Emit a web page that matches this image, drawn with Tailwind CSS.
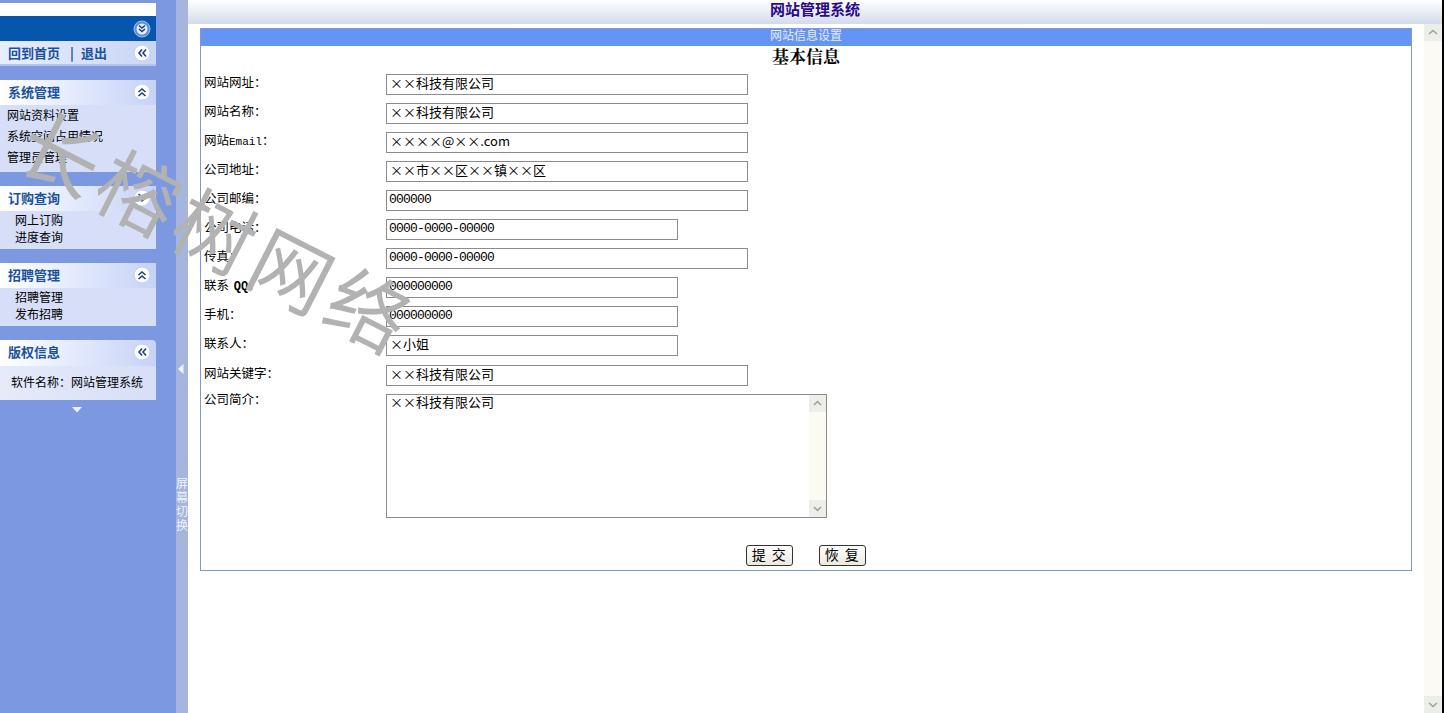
<!DOCTYPE html>
<html lang="zh-CN">

<head>
    <meta charset="UTF-8" />
    <title>网站管理系统</title>
    <script src="https://cdn.jsdelivr.net/npm/@tailwindcss/browser@4"></script>
</head>

<body class="h-[713px] w-[1444px] overflow-hidden bg-white font-['Noto_Sans_CJK_SC',sans-serif] text-[12px] leading-none text-black">
    <div class="relative flex h-[713px] border-r-2 border-black">

        <!-- Sidebar -->
        <aside class="flex w-[176px] shrink-0 flex-col bg-[#7b98e0] pt-[3px]">
            <div class="h-[13px] w-[156px] bg-white"></div>
            <div class="flex h-[25px] w-[156px] items-center justify-end bg-[#0656ad] pr-[5px]">
                <svg width="18" height="18" viewBox="0 0 18 18"><circle cx="9" cy="9" r="8" fill="#5f8fd8" stroke="#9dbdea"/><circle cx="9" cy="9" r="5.5" fill="#e6eefa"/><path d="M6 5.500 9 8l3-2.500M6 9l3 2.500L12 9" fill="none" stroke="#1f3f86" stroke-width="1.600"/></svg>
            </div>
            <div class="flex h-[25px] w-[156px] items-center justify-between border-b-2 border-[#b4c3ec] bg-gradient-to-r from-[#e8eefc] to-[#c9d5f6] pr-[5px] pl-[8px] font-bold text-[#1c5299]">
                <span class="flex text-[13px]"><span>回到首页</span><span class="ml-[10px]">|</span><span class="ml-[7px]">退出</span></span>
                <svg width="18" height="18" viewBox="0 0 18 18"><circle cx="9" cy="9" r="8" fill="#fff" stroke="#c4d0ee"/><path d="M9 5.500 6 9l3 3.500M13 5.500 10 9l3 3.500" fill="none" stroke="#1f3f86" stroke-width="1.600"/></svg>
            </div>

            <div class="mt-[14px] w-[156px]">
                <div class="flex h-[25px] items-center justify-between bg-gradient-to-r from-white to-[#c6d3f7] pr-[5px] pb-[2px] pl-[8px] text-[13px] font-bold text-[#1c5299]">
                    <span>系统管理</span>
                    <svg width="18" height="18" viewBox="0 0 18 18"><circle cx="9" cy="9" r="8" fill="#fff" stroke="#c4d0ee"/><path d="M5.500 9 9 6l3.500 3M5.500 13 9 10l3.500 3" fill="none" stroke="#1f3f86" stroke-width="1.600"/></svg>
                </div>
                <ul class="flex h-[67px] flex-col gap-[8px] bg-[#d6dff7] pt-[3px] pl-[7px] text-[12px] leading-[13px]">
                    <li>网站资料设置</li>
                    <li>系统空间占用情况</li>
                    <li>管理员管理</li>
                </ul>
            </div>

            <div class="mt-[14px] w-[156px]">
                <div class="flex h-[25px] items-center justify-between bg-gradient-to-r from-white to-[#c6d3f7] pr-[5px] pb-[2px] pl-[8px] text-[13px] font-bold text-[#1c5299]">
                    <span>订购查询</span>
                    <svg width="18" height="18" viewBox="0 0 18 18"><circle cx="9" cy="9" r="8" fill="#fff" stroke="#c4d0ee"/><path d="M5.500 5 9 8l3.500-3M5.500 9 9 12l3.500-3" fill="none" stroke="#1f3f86" stroke-width="1.600"/></svg>
                </div>
                <ul class="flex h-[38px] flex-col gap-[4px] bg-[#d6dff7] pt-[2px] pl-[15px] text-[12px] leading-[13px]">
                    <li>网上订购</li>
                    <li>进度查询</li>
                </ul>
            </div>

            <div class="mt-[14px] w-[156px]">
                <div class="flex h-[25px] items-center justify-between bg-gradient-to-r from-white to-[#c6d3f7] pr-[5px] pb-[2px] pl-[8px] text-[13px] font-bold text-[#1c5299]">
                    <span>招聘管理</span>
                    <svg width="18" height="18" viewBox="0 0 18 18"><circle cx="9" cy="9" r="8" fill="#fff" stroke="#c4d0ee"/><path d="M5.500 9 9 6l3.500 3M5.500 13 9 10l3.500 3" fill="none" stroke="#1f3f86" stroke-width="1.600"/></svg>
                </div>
                <ul class="flex h-[38px] flex-col gap-[4px] bg-[#d6dff7] pt-[2px] pl-[15px] text-[12px] leading-[13px]">
                    <li>招聘管理</li>
                    <li>发布招聘</li>
                </ul>
            </div>

            <div class="mt-[14px] w-[156px]">
                <div class="flex h-[26px] items-center justify-between rounded-tr-[4px] bg-gradient-to-r from-white to-[#c6d3f7] pr-[5px] pb-[3px] pl-[8px] text-[13px] font-bold text-[#1c5299]">
                    <span>版权信息</span>
                    <svg width="18" height="18" viewBox="0 0 18 18"><circle cx="9" cy="9" r="8" fill="#fff" stroke="#c4d0ee"/><path d="M9 5.500 6 9l3 3.500M13 5.500 10 9l3 3.500" fill="none" stroke="#1f3f86" stroke-width="1.600"/></svg>
                </div>
                <div class="flex h-[34px] items-center bg-gradient-to-r from-[#e6ebfa] to-[#d6dff7] pb-[3px] pl-[11px] text-[12px]">软件名称：网站管理系统</div>
            </div>

            <div class="mt-[7px] flex w-[156px] justify-center pr-[2px]">
                <svg width="10" height="6" viewBox="0 0 10 6"><path d="M0 0h10L5 5.500z" fill="#eef3fb"/></svg>
            </div>
        </aside>

        <!-- Splitter -->
        <div class="flex w-[12px] shrink-0 flex-col items-center bg-[#a5b5dd] text-white">
            <svg class="mt-[364px] mr-[2px]" width="6" height="10" viewBox="0 0 6 10"><path d="M5.500 0v10L0 5z" fill="#eef3fb"/></svg>
            <div class="mt-[102px] w-[12px] text-center text-[12px] leading-[14px] text-[#eef2fb]">屏幕切换</div>
        </div>

        <!-- Main -->
        <main class="flex min-w-0 flex-1 flex-col">
            <header class="h-[24px] bg-gradient-to-b from-white to-[#d3dbe9] pt-[1px] text-center text-[15px] leading-[16px] font-bold text-[#2a0a86]">网站管理系统</header>

            <div class="flex min-h-0 flex-1">
                <div class="min-w-0 flex-1 pt-[4px] pl-[12px]">
                    <section class="h-[543px] w-[1212px] border border-[#7f9ac4]">
                        <h2 class="h-[17px] bg-[#6495f5] text-center leading-[12px] font-normal text-[#e4ecff]">网站信息设置</h2>
                        <h3 class="h-[28px] pt-[3px] text-center font-['Liberation_Serif','Noto_Serif_CJK_SC','Noto_Sans_CJK_SC',serif] text-[17px] leading-[18px] font-bold">基本信息</h3>

                        <form class="flex flex-col gap-[8px] pl-[3px] text-[12.5px]">
                            <label class="flex h-[21px] items-start"><span class="w-[182px] pt-[2px]">网站网址：</span><input class="h-[21px] w-[362px] border border-[#8c8c8c] pb-[5px] pl-[3px] text-[13px]" value="××科技有限公司"></label>
                            <label class="flex h-[21px] items-start"><span class="w-[182px] pt-[2px]">网站名称：</span><input class="h-[21px] w-[362px] border border-[#8c8c8c] pb-[5px] pl-[3px] text-[13px]" value="××科技有限公司"></label>
                            <label class="flex h-[21px] items-start"><span class="w-[182px] pt-[2px]">网站<span class="font-['Liberation_Mono',monospace] text-[11px]">Email</span>：</span><input class="h-[21px] w-[362px] border border-[#8c8c8c] pb-[5px] pl-[3px] text-[13px]" value="××××@××.com"></label>
                            <label class="flex h-[21px] items-start"><span class="w-[182px] pt-[2px]">公司地址：</span><input class="h-[21px] w-[362px] border border-[#8c8c8c] pb-[5px] pl-[3px] text-[13px]" value="××市××区××镇××区"></label>
                            <label class="flex h-[21px] items-start"><span class="w-[182px] pt-[2px]">公司邮编：</span><input class="h-[21px] w-[362px] border border-[#8c8c8c] pb-[2px] pl-[2px] font-['Liberation_Mono',monospace] text-[13px] tracking-[-0.8px]" value="000000"></label>
                            <label class="flex h-[21px] items-start"><span class="w-[182px] pt-[2px]">公司电话：</span><input class="h-[21px] w-[292px] border border-[#8c8c8c] pb-[2px] pl-[2px] font-['Liberation_Mono',monospace] text-[13px] tracking-[-0.8px]" value="0000-0000-00000"></label>
                            <label class="flex h-[21px] items-start"><span class="w-[182px] pt-[2px]">传真：</span><input class="h-[21px] w-[362px] border border-[#8c8c8c] pb-[2px] pl-[2px] font-['Liberation_Mono',monospace] text-[13px] tracking-[-0.8px]" value="0000-0000-00000"></label>
                            <label class="flex h-[21px] items-start"><span class="w-[182px] pt-[2px]">联系 <b class="ml-[2px] font-['Liberation_Mono',monospace] text-[12px]">QQ</b>：</span><input class="h-[21px] w-[292px] border border-[#8c8c8c] pb-[2px] pl-[2px] font-['Liberation_Mono',monospace] text-[13px] tracking-[-0.8px]" value="000000000"></label>
                            <label class="flex h-[21px] items-start"><span class="w-[182px] pt-[2px]">手机：</span><input class="h-[21px] w-[292px] border border-[#8c8c8c] pb-[2px] pl-[2px] font-['Liberation_Mono',monospace] text-[13px] tracking-[-0.8px]" value="000000000"></label>
                            <label class="flex h-[21px] items-start"><span class="w-[182px] pt-[2px]">联系人：</span><input class="h-[21px] w-[292px] border border-[#8c8c8c] pb-[5px] pl-[3px] text-[13px]" value="×小姐"></label>
                            <label class="mt-[1px] flex h-[21px] items-start"><span class="w-[182px] pt-[2px]">网站关键字：</span><input class="h-[21px] w-[362px] border border-[#8c8c8c] pb-[5px] pl-[3px] text-[13px]" value="××科技有限公司"></label>
                            <label class="flex h-[124px] items-start">
                                <span class="-mt-[1px] w-[182px]">公司简介：</span>
                                <span class="flex h-[124px] w-[441px] border border-[#8c8c8c]">
                                    <textarea class="min-w-0 flex-1 resize-none overflow-hidden pl-[3px] text-[13px] outline-none">××科技有限公司</textarea>
                                    <span class="flex w-[17px] flex-col justify-between bg-[#fbfbf3]">
                                        <svg width="17" height="17" viewBox="0 0 17 17"><rect width="17" height="17" fill="#ecefe8"/><path d="m5 10 3.500-3.500L12 10" fill="none" stroke="#9aa39a" stroke-width="1.500"/></svg>
                                        <svg width="17" height="17" viewBox="0 0 17 17"><rect width="17" height="17" fill="#ecefe8"/><path d="m5 7 3.500 3.500L12 7" fill="none" stroke="#9aa39a" stroke-width="1.500"/></svg>
                                    </span>
                                </span>
                            </label>
                            <div class="mt-[19px] flex justify-center gap-[26px] pr-[3px]">
                                <button type="button" class="h-[21px] w-[47px] rounded-[3px] border border-[#333] bg-gradient-to-b from-white to-[#ece9dd] pb-[4px] text-[14px] tracking-[1.5px]">提 交</button>
                                <button type="button" class="h-[21px] w-[47px] rounded-[3px] border border-[#333] bg-gradient-to-b from-white to-[#ece9dd] pb-[4px] text-[14px] tracking-[1.5px]">恢 复</button>
                            </div>
                        </form>
                    </section>
                </div>

                <!-- Page scrollbar -->
                <div class="flex w-[18px] shrink-0 flex-col justify-between bg-[#fbfbf3]">
                    <svg width="18" height="17" viewBox="0 0 18 17"><rect width="18" height="17" fill="#ecefe8"/><path d="m5 10 4-3.500 4 3.500" fill="none" stroke="#9aa39a" stroke-width="1.500"/></svg>
                    <svg width="18" height="17" viewBox="0 0 18 17"><rect width="18" height="17" fill="#ecefe8"/><path d="m5 7 4 3.500L13 7" fill="none" stroke="#9aa39a" stroke-width="1.500"/></svg>
                </div>
            </div>
        </main>

        <!-- Watermark -->
        <div class="pointer-events-none absolute top-[92px] left-[28px] origin-left rotate-[27deg] text-[80px] leading-[80px] tracking-[6px] whitespace-nowrap text-[#b2b2b2]">长榕树网络</div>
    </div>
</body>

</html>
